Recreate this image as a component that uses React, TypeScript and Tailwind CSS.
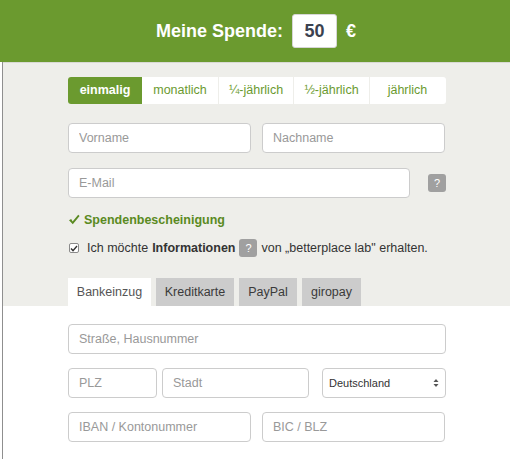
import React from "react";

const inputCls =
  "h-[30px] rounded-[4px] border border-[#cccccc] bg-white px-[10px] text-[12.5px] text-[#333] placeholder:text-[#999] outline-none";

function Badge({ className = "" }: { className?: string }) {
  return (
    <span
      className={
        "inline-flex h-[18px] w-[18px] items-center justify-center rounded-[3px] bg-[#a0a0a0] text-[11px] leading-none text-white " +
        className
      }
    >
      ?
    </span>
  );
}

export default function App() {
  const tabs = ["einmalig", "monatlich", "¼-jährlich", "½-jährlich", "jährlich"];
  const widths = ["w-[74px]", "w-[76px]", "w-[75px]", "w-[76px]", "w-[76px]"];
  return (
    <div className="h-[459px] w-[510px] overflow-hidden bg-white font-['Liberation_Sans',Arial,sans-serif]">
      {/* Header */}
      <div className="flex h-[62px] items-center justify-center gap-[9px] bg-[#6b9a2f] pl-[2px]">
        <span className="text-[18px] font-bold text-white">Meine Spende:</span>
        <div className="flex h-[34px] w-[45px] items-center justify-center rounded-[3px] border border-[#d6d6d6] bg-white text-[18px] font-bold text-[#3b4250]">
          50
        </div>
        <span className="text-[18px] font-bold text-white">€</span>
      </div>

      {/* Body */}
      <div className="ml-[2px] h-[397px] border-l border-[#8f8f8f]">
        <div className="border-t border-[#d9d9d4] bg-[#eeeeea] pl-[65px]">
          <div className="w-[378px] pt-[14px]">
            {/* Frequency tabs */}
            <div className="flex h-[27px] overflow-hidden rounded-[3px] bg-white text-[12.5px]">
              {tabs.map((t, i) => (
                <div
                  key={t}
                  className={
                    "flex items-center justify-center " +
                    widths[i] +
                    (i === 0
                      ? " bg-[#6b9a2f] font-bold text-white"
                      : " text-[#6b9a2f]") +
                    (i > 1 ? " border-l border-[#eeeeea]" : "")
                  }
                >
                  {t}
                </div>
              ))}
            </div>

            {/* Name */}
            <div className="mt-[19px] flex gap-[11px]">
              <input className={inputCls + " h-[29px] w-[183px]"} placeholder="Vorname" />
              <input className={inputCls + " h-[29px] w-[183px]"} placeholder="Nachname" />
            </div>

            {/* Email */}
            <div className="mt-[15px] flex items-center">
              <input className={inputCls + " h-[29px] w-[342px]"} placeholder="E-Mail" />
              <Badge className="ml-[18px]" />
            </div>

            {/* Spendenbescheinigung */}
            <div className="mt-[13px] flex h-[18px] items-center gap-[4px] text-[12.5px] font-bold text-[#5a8a22]">
              <svg width="12" height="11" viewBox="0 0 12 11" className="-mt-[1px]">
                <path d="M1 6.2 L3.2 5 L4.6 7.4 L10.2 0.8 L11.6 2 L4.8 10.2 Z" fill="#5a8a22" />
              </svg>
              <span>Spendenbescheinigung</span>
            </div>

            {/* Checkbox line */}
            <div className="mt-[10px] flex h-[18px] items-center text-[12.5px] text-[#333]">
              <span className="ml-[1px] flex h-[10px] w-[10px] items-center justify-center rounded-[2px] border border-[#8a8a8a] bg-white">
                <svg width="8" height="7" viewBox="0 0 8 7">
                  <path d="M1 3.6 L3 5.6 L7 1" stroke="#333" strokeWidth="1.4" fill="none" />
                </svg>
              </span>
              <span className="ml-[8px]">Ich möchte </span>
              <span className="ml-[4px] font-bold">Informationen</span>
              <Badge className="ml-[4px]" />
              <span className="ml-[4px]">von „betterplace lab" erhalten.</span>
            </div>

            {/* Payment tabs */}
            <div className="mt-[21px] flex h-[28px] items-end gap-[5px] text-[12.5px]">
              <div className="flex h-[28px] w-[83px] items-center justify-center bg-white text-[#555]">
                Bankeinzug
              </div>
              <div className="flex h-[28px] w-[78px] items-center justify-center bg-[#cccccc] text-[#3a3a3a]">
                Kreditkarte
              </div>
              <div className="flex h-[28px] w-[58px] items-center justify-center bg-[#cccccc] text-[#3a3a3a]">
                PayPal
              </div>
              <div className="flex h-[28px] w-[59px] items-center justify-center bg-[#cccccc] text-[#3a3a3a]">
                giropay
              </div>
            </div>
          </div>
        </div>

        {/* White area */}
        <div className="w-[443px] pl-[65px] pt-[18px]">
          <input className={inputCls + " w-[378px]"} placeholder="Straße, Hausnummer" />
          <div className="mt-[14px] flex">
            <input className={inputCls + " w-[89px]"} placeholder="PLZ" />
            <input className={inputCls + " ml-[5px] w-[147px]"} placeholder="Stadt" />
            <div className="ml-[13px] flex h-[30px] w-[124px] items-center justify-between rounded-[4px] border border-[#cccccc] bg-white pl-[6px] pr-[6px] text-[11px] text-[#333]">
              <span>Deutschland</span>
              <svg width="6" height="10" viewBox="0 0 6 10">
                <path d="M0.5 4 L3 1 L5.5 4 Z" fill="#555" />
                <path d="M0.5 6 L3 9 L5.5 6 Z" fill="#555" />
              </svg>
            </div>
          </div>
          <div className="mt-[14px] flex gap-[11px]">
            <input className={inputCls + " w-[183px]"} placeholder="IBAN / Kontonummer" />
            <input className={inputCls + " w-[183px]"} placeholder="BIC / BLZ" />
          </div>
        </div>
      </div>
    </div>
  );
}
